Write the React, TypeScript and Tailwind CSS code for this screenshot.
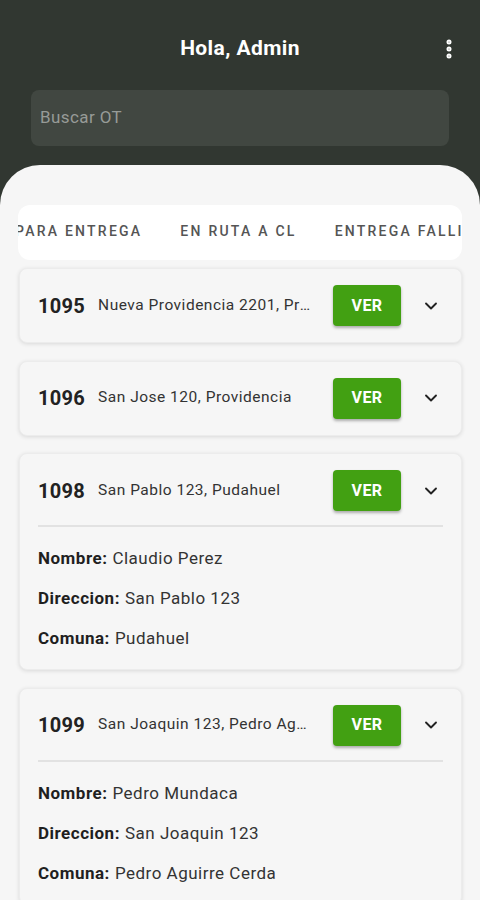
import React from 'react';
import { ChevronDown, EllipsisVertical } from 'lucide-react';

interface Order {
  id: string;
  address: string;
  open?: boolean;
  nombre?: string;
  direccion?: string;
  comuna?: string;
}

const orders: Order[] = [
  { id: '1095', address: 'Nueva Providencia 2201, Providencia' },
  { id: '1096', address: 'San Jose 120, Providencia' },
  {
    id: '1098',
    address: 'San Pablo 123, Pudahuel',
    open: true,
    nombre: 'Claudio Perez',
    direccion: 'San Pablo 123',
    comuna: 'Pudahuel',
  },
  {
    id: '1099',
    address: 'San Joaquin 123, Pedro Aguirre Cerda',
    open: true,
    nombre: 'Pedro Mundaca',
    direccion: 'San Joaquin 123',
    comuna: 'Pedro Aguirre Cerda',
  },
];

const OrderCard: React.FC<{ order: Order }> = ({ order }) => {
  return (
    <div className="bg-[#f6f6f6] rounded-lg border border-[#ececec] shadow-[0_1px_4px_rgba(0,0,0,0.12)] pl-[18px]">
      <div className="flex items-center h-[73px]">
        <span className="text-[20px] font-bold tracking-[0.3px] text-[#222] mr-[13px]">{order.id}</span>
        <span className="flex-1 min-w-0 truncate text-[15.5px] tracking-[0.5px] text-[#333]">{order.address}</span>
        <button className="ml-[20px] w-[68px] h-[41px] shrink-0 rounded bg-[#42a012] text-white text-[16px] font-bold tracking-wide shadow-[0_2px_3px_rgba(0,0,0,0.3)]">
          VER
        </button>
        <div className="w-[60px] shrink-0 flex justify-center">
          <ChevronDown className="w-5 h-5 text-[#222]" strokeWidth={2.25} />
        </div>
      </div>
      {order.open && (
        <div className="mr-[18px] -mt-[2px] border-t-2 border-[#e2e2e2] pt-[12px] pb-[10px] text-[17px] tracking-[0.5px] text-[#333]">
          <div className="h-[40px] flex items-center">
            <span className="font-bold text-[#1f1f1f] mr-[5px]">Nombre:</span>
            {order.nombre}
          </div>
          <div className="h-[40px] flex items-center">
            <span className="font-bold text-[#1f1f1f] mr-[5px]">Direccion:</span>
            {order.direccion}
          </div>
          <div className="h-[40px] flex items-center">
            <span className="font-bold text-[#1f1f1f] mr-[5px]">Comuna:</span>
            {order.comuna}
          </div>
        </div>
      )}
    </div>
  );
};

export default function App() {
  return (
    <div className="w-[480px] h-[900px] overflow-hidden bg-[#313731] font-['Roboto',sans-serif]">
      <header className="h-[165px] px-[31px] pt-[31px]">
        <div className="relative flex items-center justify-center h-[36px]">
          <h1 className="text-[21px] font-bold tracking-[0.4px] text-white">Hola, Admin</h1>
          <EllipsisVertical className="absolute right-[-12px] w-6 h-6 text-white" strokeWidth={3} />
        </div>
        <div className="mt-[23px] h-[56px] rounded-lg bg-[#414741] flex items-center px-[9px]">
          <span className="text-[17px] tracking-[0.4px] text-[#979b97]">Buscar OT</span>
        </div>
      </header>

      <main className="h-[735px] bg-[#f6f6f6] rounded-t-[40px] pt-[40px] px-[18px]">
        <div className="h-[55px] bg-white rounded-xl overflow-hidden flex items-center pb-[3px]">
          <div className="flex items-center gap-[38px] whitespace-nowrap ml-[-3px] text-[14px] font-medium tracking-[0.16em] text-[#555]">
            <span>PARA ENTREGA</span>
            <span>EN RUTA A CL</span>
            <span>ENTREGA FALLIDA</span>
          </div>
        </div>

        <div className="mt-[8px] flex flex-col gap-[17.5px] pl-[1px]">
          {orders.map((o) => (
            <OrderCard key={o.id} order={o} />
          ))}
        </div>
      </main>
    </div>
  );
}
